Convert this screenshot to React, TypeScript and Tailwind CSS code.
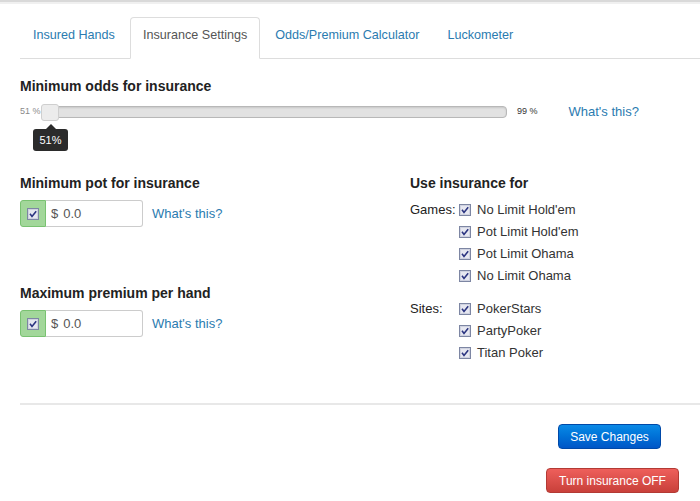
import React from "react";

const tabs = ["Insured Hands", "Insurance Settings", "Odds/Premium Calculator", "Luckometer"];
const games = ["No Limit Hold'em", "Pot Limit Hold'em", "Pot Limit Ohama", "No Limit Ohama"];
const sites = ["PokerStars", "PartyPoker", "Titan Poker"];

const Check = () => (
  <svg width="12" height="12" viewBox="0 0 12 12" className="shrink-0">
    <rect x="0.5" y="0.5" width="11" height="11" fill="#f1f1f6" stroke="#7d86a3" />
    <rect x="1.5" y="1.5" width="9" height="9" fill="#e6e7f0" stroke="#cfd2e0" />
    <path d="M3 5.8 L5 8.4 L9.2 3.3" stroke="#2b3480" strokeWidth="1.6" fill="none" />
  </svg>
);

const MoneyInput = () => (
  <div className="flex h-[27px] w-[123px]">
    <div className="flex w-[26px] items-center justify-center rounded-l-[3px] border border-[#79c271] bg-[#a2d79a]">
      <Check />
    </div>
    <div className="flex flex-1 items-center rounded-r-[3px] border border-l-0 border-[#cccccc] bg-white pl-[5px] text-[13px] text-[#555]">
      <span>$</span>
      <span className="ml-[5px]">0.0</span>
    </div>
  </div>
);

const Link = ({ className = "" }: { className?: string }) => (
  <span className={"text-[13px] text-[#2b7bb0] " + className}>What's this?</span>
);

const App = () => {
  return (
    <div className="h-[501px] w-[700px] overflow-hidden bg-white font-['Liberation_Sans',Arial,sans-serif] text-[#222]">
      <div className="h-[2px] bg-[#d9d9d9]" />
      <div className="h-[2px] bg-[#f0f0f0]" />

      <div className="pl-5 pt-[13px]">
        {/* Tabs */}
        <div className="flex border-b border-[#dddddd]">
          {tabs.map((t, i) => (
            <div
              key={t}
              className={
                "-mb-px mr-[2px] rounded-t-[4px] border px-3 pb-[13px] pt-[7px] text-[12.6px] leading-5 " +
                (i === 1
                  ? "border-[#dddddd] border-b-white bg-white text-[#555]"
                  : "border-transparent text-[#2b7bb0]")
              }
            >
              {t}
            </div>
          ))}
        </div>

        {/* Minimum odds */}
        <h2 className="mt-[17px] text-[14px] font-bold leading-5">Minimum odds for insurance</h2>
        <div className="mt-[6px] flex h-[20px] items-center">
          <span className="w-[22px] text-[9px] text-[#8a8a8a]">51 %</span>
          <div className="relative h-[12px] w-[465px] rounded-[4px] border border-[#b8b8b8] bg-[#e2e2e2] shadow-[inset_0_1px_2px_rgba(0,0,0,0.12)]">
            <div className="absolute -left-[2px] -top-[3px] h-[17px] w-[18px] rounded-[3px] border border-[#cfcfcf] bg-[#ececec]" />
            <div className="absolute left-[-10px] top-[17px] flex flex-col items-center">
              <div className="h-0 w-0 border-x-[5px] border-b-[5px] border-x-transparent border-b-[#2b2b2b]" />
              <div className="flex h-[22px] w-[35px] items-center justify-center rounded-[3px] bg-[#2b2b2b] text-[11px] text-white">
                51%
              </div>
            </div>
          </div>
          <span className="ml-[10px] text-[9px] text-[#333]">99 %</span>
          <Link className="ml-[31px]" />
        </div>

        {/* Two columns */}
        <div className="mt-[51px] grid grid-cols-[390px_1fr]">
          <div>
            <h2 className="text-[14px] font-bold leading-5">Minimum pot for insurance</h2>
            <div className="mt-[7px] flex items-center">
              <MoneyInput />
              <Link className="ml-[9px]" />
            </div>
            <h2 className="mt-[56px] text-[14px] font-bold leading-5">Maximum premium per hand</h2>
            <div className="mt-[7px] flex items-center">
              <MoneyInput />
              <Link className="ml-[9px]" />
            </div>
          </div>

          <div>
            <h2 className="text-[14px] font-bold leading-5">Use insurance for</h2>
            <div className="mt-[6px] flex text-[13px]">
              <div className="w-[49px] leading-[22px] text-[#222]">Games:</div>
              <div className="flex flex-col">
                {games.map((g) => (
                  <div key={g} className="flex h-[22px] items-center gap-[6px] text-[#333]">
                    <Check />
                    <span>{g}</span>
                  </div>
                ))}
              </div>
            </div>
            <div className="mt-[11px] flex text-[13px]">
              <div className="w-[49px] leading-[22px] text-[#222]">Sites:</div>
              <div className="flex flex-col">
                {sites.map((s) => (
                  <div key={s} className="flex h-[22px] items-center gap-[6px] text-[#333]">
                    <Check />
                    <span>{s}</span>
                  </div>
                ))}
              </div>
            </div>
          </div>
        </div>

        <div className="mt-[39px] border-t-2 border-[#e8e8e8]" />

        {/* Buttons */}
        <div className="flex flex-col items-end pr-[21px]">
          <button className="mr-[18px] mt-[19px] h-[25px] w-[103px] rounded-[4px] border border-[#0049a8] bg-gradient-to-b from-[#0b8ae6] to-[#0056c7] text-[12px] text-white">
            Save Changes
          </button>
          <button className="mt-[19px] h-[25px] w-[133px] rounded-[4px] border border-[#b33a34] bg-gradient-to-b from-[#ee5f5b] to-[#c9403a] text-[12px] text-white">
            Turn insurance OFF
          </button>
        </div>
      </div>
    </div>
  );
};

export default App;
